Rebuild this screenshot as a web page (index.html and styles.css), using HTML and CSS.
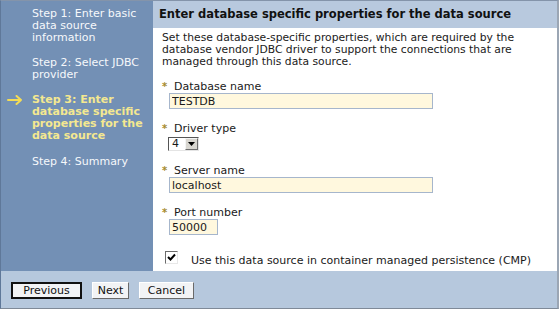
FILE: index.html
```html
<!DOCTYPE html>
<html>
<head>
    <meta charset="utf-8" />
    <title>New data source</title>
    <link rel="stylesheet" href="styles.css">
</head>
<body>
    <div class="wizard">
        <div class="steps">
            <div class="step">
                <span class="step-mark"></span>
                <span class="step-text">Step 1: Enter basic data source information</span>
            </div>
            <div class="step">
                <span class="step-mark"></span>
                <span class="step-text">Step 2: Select JDBC provider</span>
            </div>
            <div class="step current">
                <span class="step-mark">
                    <svg width="16" height="10" viewBox="0 0 16 10">
                        <path d="M1 5 H14 M9.5 1 L14 5 L9.5 9" fill="none" stroke="#f4dc55" stroke-width="2" stroke-linecap="round" stroke-linejoin="round" />
                    </svg>
                </span>
                <span class="step-text">Step 3: Enter database specific properties for the data source</span>
            </div>
            <div class="step">
                <span class="step-mark"></span>
                <span class="step-text">Step 4: Summary</span>
            </div>
        </div>

        <div class="panel">
            <h1 class="panel-title">Enter database specific properties for the data source</h1>
            <div class="panel-body">
                <p class="intro">
                    Set these database-specific properties, which are required by the database vendor JDBC driver to support the connections that are managed through this data source.
                </p>

                <div class="field">
                    <label class="field-label" for="db_name"><span class="req">*</span>Database name</label>
                    <input type="text" id="db_name" class="text-input wide" value="TESTDB" />
                </div>

                <div class="field">
                    <label class="field-label"><span class="req">*</span>Driver type</label>
                    <div class="select">
                        <span class="select-value">4</span>
                        <span class="select-button">
                            <svg width="7" height="4" viewBox="0 0 7 4">
                                <path d="M0 0 H7 L3.5 4 Z" fill="#000" />
                            </svg>
                        </span>
                    </div>
                </div>

                <div class="field">
                    <label class="field-label" for="server_name"><span class="req">*</span>Server name</label>
                    <input type="text" id="server_name" class="text-input wide" value="localhost" />
                </div>

                <div class="field">
                    <label class="field-label" for="port"><span class="req">*</span>Port number</label>
                    <input type="text" id="port" class="text-input short" value="50000" />
                </div>

                <div class="cmp-row">
                    <span class="checkbox">
                        <svg width="9" height="9" viewBox="0 0 9 9">
                            <path d="M1 4 L3.5 6.5 L8 1.5" fill="none" stroke="#000" stroke-width="2" />
                        </svg>
                    </span>
                    <span class="cmp-text">Use this data source in container managed persistence (CMP)</span>
                </div>
            </div>
        </div>

        <div class="actions">
            <button class="btn btn-default btn-previous">Previous</button>
            <button class="btn btn-next">Next</button>
            <button class="btn btn-cancel">Cancel</button>
        </div>
    </div>
</body>
</html>
```

FILE: styles.css
```css
body {
    margin: 0;
    font-family: "DejaVu Sans", Verdana, sans-serif;
    font-size: 11px;
    color: #1a1a1a;
}

.wizard {
    display: grid;
    grid-template-columns: 152px 1fr;
    grid-template-rows: 1fr 37px;
    width: 559px;
    height: 309px;
    box-sizing: border-box;
    border-top: 1px solid #8494aa;
    border-right: 2px solid #9ba6b4;
    border-bottom: 1px solid #7f8a98;
    border-left: 1px solid #5f7899;
}

.steps {
    background-color: #7390b5;
    padding-top: 7px;
}

.step {
    display: grid;
    grid-template-columns: 31px 1fr;
    line-height: 12px;
    margin-bottom: 13px;
    color: #f6f8fb;
}

.step-mark {
    padding-left: 6px;
    padding-top: 1px;
}

.step-text {
    padding-right: 10px;
}

.step.current {
    font-weight: bold;
    color: #f4e890;
    margin-bottom: 14px;
}

.panel {
    display: flex;
    flex-direction: column;
    background-color: #ffffff;
}

.panel-title {
    margin: 0;
    height: 27px;
    line-height: 27px;
    padding-left: 6px;
    font-size: 11.5px;
    font-weight: bold;
    color: #111;
    background-color: #b8c9de;
}

.panel-body {
    padding: 4px 10px 0 9px;
}

.intro {
    margin: 0 0 12px 0;
    line-height: 12px;
    font-size: 10.75px;
}

.field {
    margin-bottom: 13px;
}

.field-label {
    display: block;
    line-height: 13px;
}

.req {
    display: inline-block;
    width: 12px;
    font-size: 10px;
    font-weight: bold;
    color: #a58a2c;
}

.text-input {
    display: block;
    box-sizing: border-box;
    height: 16px;
    margin: 0 0 0 7px;
    padding: 0 2px;
    border: 1px solid #a6b6cc;
    background-color: #fff8de;
    font-family: "DejaVu Sans", Verdana, sans-serif;
    font-size: 11px;
    color: #1a1a1a;
}

.wide {
    width: 264px;
}

.short {
    width: 49px;
}

.select {
    display: flex;
    align-items: center;
    box-sizing: border-box;
    width: 31px;
    height: 14px;
    margin: 2px 0 0 6px;
    border: 1px solid;
    border-color: #555 #e4e4e4 #e4e4e4 #555;
    background-color: #fff;
}

.select-value {
    flex: 1;
    padding-left: 3px;
    line-height: 12px;
}

.select-button {
    display: flex;
    align-items: center;
    justify-content: center;
    box-sizing: border-box;
    width: 13px;
    height: 12px;
    background-color: #d8d6d0;
    border: 1px solid;
    border-color: #f4f4f4 #6e6e6e #6e6e6e #f4f4f4;
}

.cmp-row {
    display: flex;
    align-items: center;
    margin: 13px 0 0 3px;
}

.checkbox {
    display: flex;
    align-items: center;
    justify-content: center;
    box-sizing: border-box;
    width: 13px;
    height: 13px;
    border: 1px solid;
    border-color: #6b6b6b #e8e8e8 #e8e8e8 #6b6b6b;
    background-color: #fff;
}

.cmp-text {
    margin-left: 13px;
    padding-top: 6px;
}

.actions {
    grid-column: 1 / 3;
    display: flex;
    align-items: flex-start;
    gap: 10px;
    padding: 11px 0 0 10px;
    background-color: #b6c8dd;
}

.btn {
    box-sizing: border-box;
    height: 17px;
    padding: 0;
    font-family: "DejaVu Sans", Verdana, sans-serif;
    font-size: 11px;
    line-height: 13px;
    color: #111;
    background-color: #f2f3f5;
    border: 1px solid;
    border-color: #ffffff #6a6a6a #6a6a6a #ffffff;
}

.btn-default {
    border: 2px solid #111;
}

.btn-previous {
    width: 71px;
}

.btn-next {
    width: 37px;
}

.btn-cancel {
    width: 55px;
}
```
